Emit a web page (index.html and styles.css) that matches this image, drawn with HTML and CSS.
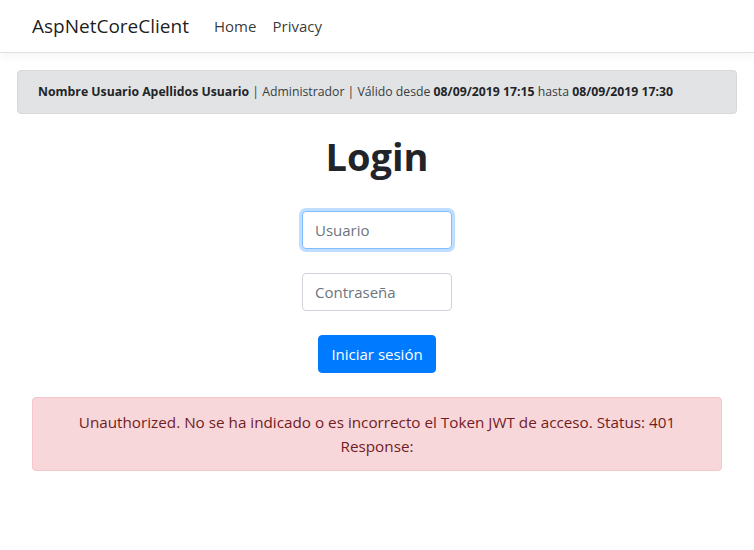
FILE: index.html
```html
<!DOCTYPE html>
<html lang="es">
<head>
    <meta charset="UTF-8">
    <meta name="viewport" content="width=device-width, initial-scale=1.0">
    <title>Login - AspNetCoreClient</title>
    <link rel="stylesheet" href="styles.css">
</head>
<body>
    <!-- Navbar -->
    <header class="navbar">
        <a class="brand" href="#">AspNetCoreClient</a>
        <nav class="nav-links">
            <a href="#">Home</a>
            <a href="#">Privacy</a>
        </nav>
    </header>

    <div class="page">
        <!-- Session info -->
        <div class="session-info">
            <b>Nombre Usuario Apellidos Usuario</b> | Administrador | Válido desde <b>08/09/2019 17:15</b> hasta <b>08/09/2019 17:30</b>
        </div>

        <main class="container">
            <h1>Login</h1>
            <form class="login-form" onsubmit="return false">
                <input type="text" class="form-control focused" placeholder="Usuario">
                <input type="password" class="form-control" placeholder="Contraseña">
                <button type="submit" class="btn-primary">Iniciar sesión</button>
            </form>

            <div class="alert-danger">
                Unauthorized. No se ha indicado o es incorrecto el Token JWT de acceso. Status: 401<br>
                Response:
            </div>
        </main>
    </div>
</body>
</html>
```

FILE: styles.css
```css
/* Reset */
body, h1, form {
    margin: 0;
    padding: 0;
}

body {
    background-color: #fff;
    color: #212529;
    font-family: "Open Sans", "Noto Sans", sans-serif;
    font-size: 16px;
}

/* Navbar */
.navbar {
    display: flex;
    align-items: center;
    height: 52px;
    padding: 0 32px;
    border-bottom: 1px solid #dee2e6;
    box-shadow: 0 4px 8px rgba(0, 0, 0, 0.04);
}

.brand {
    font-size: 19px;
    color: rgba(0, 0, 0, 0.9);
    text-decoration: none;
    margin-right: 25px;
}

.nav-links a {
    font-size: 15px;
    color: rgba(0, 0, 0, 0.8);
    text-decoration: none;
    margin-right: 12px;
}

/* Session info */
.page {
    padding: 17px 17px 0;
}

.session-info {
    background-color: #e2e3e5;
    border: 1px solid #d6d8db;
    border-radius: 4px;
    color: #383d41;
    font-size: 12.25px;
    height: 42px;
    line-height: 42px;
    padding: 0 20px;
}

.session-info b {
    color: #212529;
}

/* Login */
.container {
    padding: 0 15px;
    text-align: center;
}

h1 {
    font-size: 38px;
    font-weight: 700;
    line-height: 1.2;
    margin-top: 20px;
    margin-bottom: 31px;
}

.login-form {
    display: flex;
    flex-direction: column;
    align-items: center;
    gap: 24px;
}

.form-control {
    box-sizing: border-box;
    width: 150px;
    height: 38px;
    padding: 6px 12px;
    font-family: inherit;
    font-size: 15px;
    color: #495057;
    border: 1px solid #ced4da;
    border-radius: 4px;
    outline: none;
}

.form-control::placeholder {
    color: #6c757d;
}

.form-control.focused {
    border-color: #80bdff;
    box-shadow: 0 0 0 3px rgba(0, 123, 255, 0.25);
}

.btn-primary {
    height: 38px;
    padding: 0 12px;
    background-color: #007bff;
    color: #fff;
    border: 1px solid #007bff;
    border-radius: 4px;
    font-family: inherit;
    font-size: 15px;
    cursor: pointer;
}

/* Error alert */
.alert-danger {
    margin-top: 24px;
    padding: 12px 20px;
    background-color: #f8d7da;
    border: 1px solid #f5c6cb;
    border-radius: 4px;
    color: #721c24;
    font-size: 15.25px;
    line-height: 24px;
}
```
